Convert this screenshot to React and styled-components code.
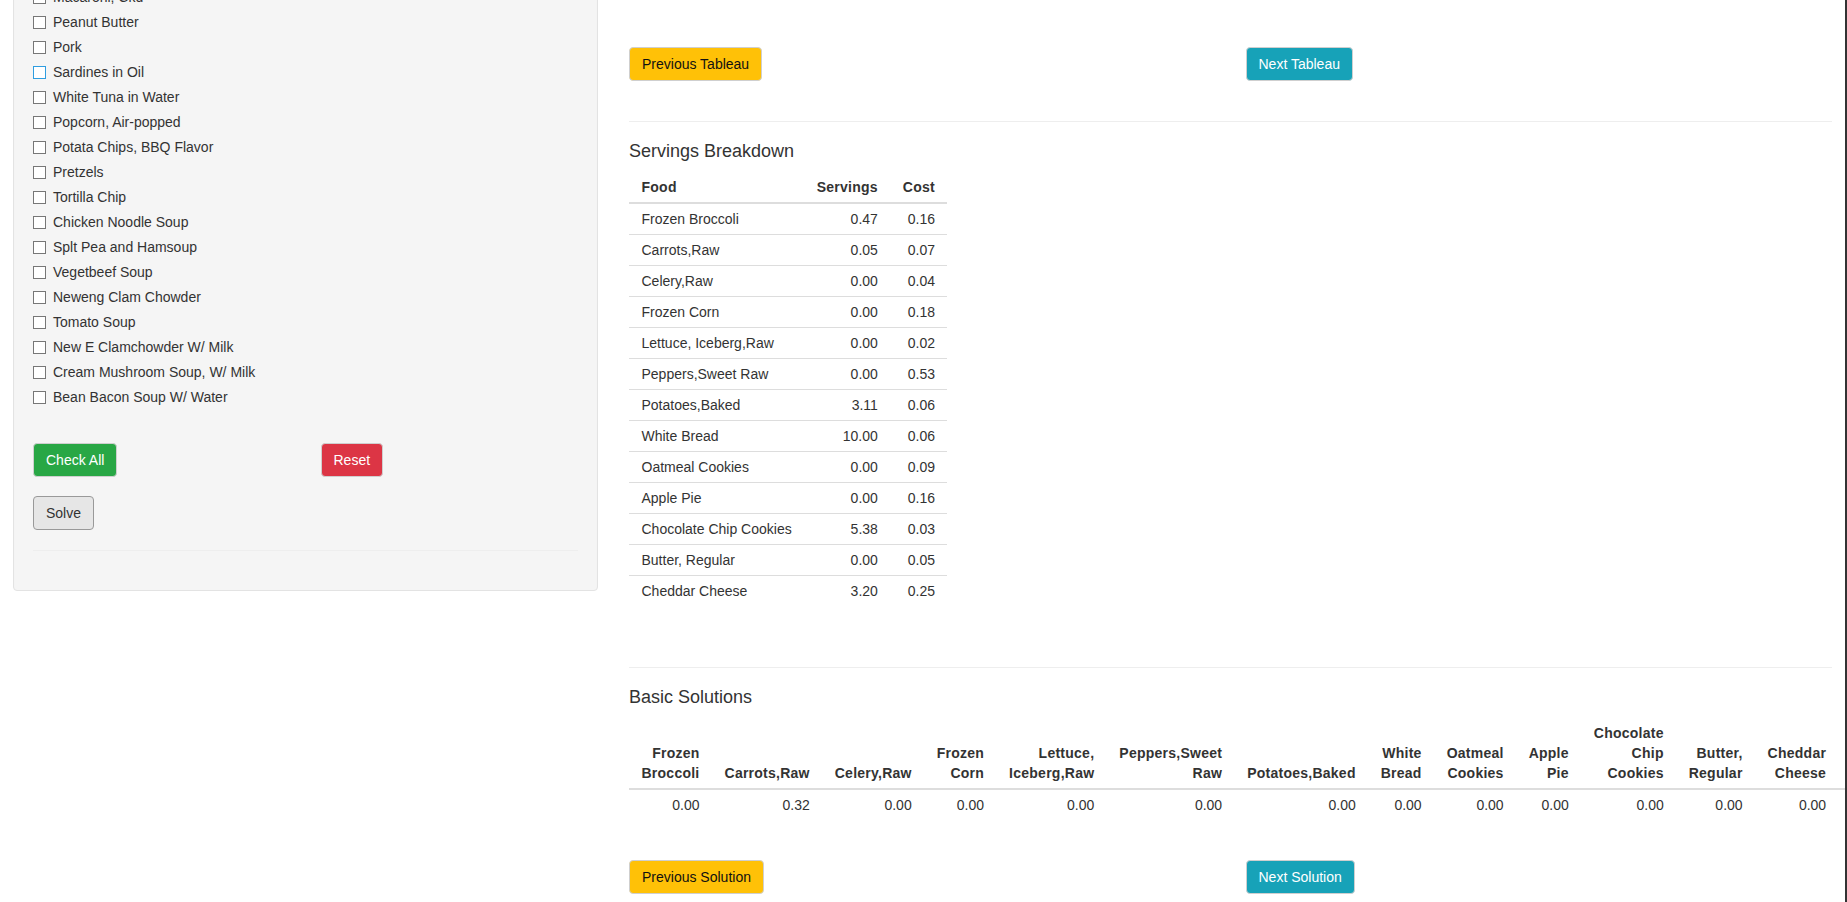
import React from "react";
import styled, { createGlobalStyle } from "styled-components";

const GlobalStyle = createGlobalStyle`
  html, body {
    margin: 0;
    overflow: hidden;
  }
  body {
    font-family: "Liberation Sans", Arial, Helvetica, sans-serif;
    font-size: 14px;
    line-height: 1.42857;
    color: #333;
    background: #fff;
  }
  * { box-sizing: border-box; }
`;

const Page = styled.div`
  display: grid;
  grid-template-columns: 585px 1fr;
  column-gap: 31px;
  padding: 0 15px 0 13px;
  align-items: start;
`;

const Well = styled.div`
  margin-top: -43px;
  padding: 19px;
  background: #f5f5f5;
  border: 1px solid #e3e3e3;
  border-radius: 4px;
  box-shadow: inset 0 1px 1px rgba(0, 0, 0, 0.05);
`;

const FoodList = styled.div`
  display: flex;
  flex-direction: column;
  gap: 5px;
  padding: 10px 0;
`;

const FoodLabel = styled.label`
  display: flex;
  align-items: flex-start;
  height: 20px;
  line-height: 20px;
  cursor: pointer;
`;

const Check = styled.input.attrs({ type: "checkbox" })`
  appearance: none;
  width: 13px;
  height: 13px;
  margin: 4px 7px 0 0;
  flex-shrink: 0;
  background: #fff;
  border: 1px solid ${(p) => (p.$focused ? "#2f9de0" : "#777")};
  border-radius: 0;
`;

const ButtonRow = styled.div`
  display: grid;
  grid-template-columns: 1fr 1fr;
  column-gap: 30px;
  justify-items: start;
  margin-top: ${(p) => p.$top || 0}px;
`;

const variants = {
  success: { bg: "#28a745", fg: "#fff", border: "#cfcfcf" },
  danger: { bg: "#dc3545", fg: "#fff", border: "#cfcfcf" },
  warning: { bg: "#ffc107", fg: "#111", border: "#cfcfcf" },
  info: { bg: "#17a2b8", fg: "#fff", border: "#cfcfcf" },
  plain: { bg: "#e6e6e6", fg: "#333", border: "#999" },
};

const Button = styled.button`
  font-family: inherit;
  font-size: 14px;
  line-height: 20px;
  padding: 6px 12px;
  border-radius: 4px;
  cursor: pointer;
  background: ${(p) => variants[p.$variant].bg};
  color: ${(p) => variants[p.$variant].fg};
  border: 1px solid ${(p) => variants[p.$variant].border};
`;

const Divider = styled.hr`
  border: 0;
  border-top: 1px solid #eee;
  margin: ${(p) => p.$top ?? 20}px 0 20px;
`;

const Main = styled.div`
  min-width: 0;
`;

const SectionTitle = styled.h4`
  font-size: 18px;
  font-weight: 500;
  line-height: 1.1;
  margin: 0 0 10px;
  color: #333;
`;

const DataTable = styled.table`
  border-collapse: collapse;
  border-spacing: 0;
  margin-bottom: ${(p) => p.$after || 40}px;
`;

const Th = styled.th`
  padding: 5px 12.5px;
  text-align: ${(p) => p.$align || "right"};
  vertical-align: bottom;
  border-bottom: 2px solid #ddd;
  font-weight: bold;
  letter-spacing: 0.25px;
  line-height: 20px;
  color: #333;
  ${(p) => p.$tight && "width: 1px;"}
  &:last-child {
    ${(p) => p.$tight && "padding-right: 20px;"}
  }
`;

const Td = styled.td`
  padding: 5px 12.5px;
  text-align: ${(p) => p.$align || "right"};
  border-top: 1px solid #ddd;
  line-height: 20px;
  ${(p) => p.$tight && "width: 1px; border-top: 0;"}
  &:last-child {
    ${(p) => p.$tight && "padding-right: 20px;"}
  }
`;

const EdgeLine = styled.div`
  position: fixed;
  top: 0;
  right: 0;
  bottom: 0;
  width: 2px;
  background: #333;
`;

const foods = [
  "Macaroni, Ckd",
  "Peanut Butter",
  "Pork",
  "Sardines in Oil",
  "White Tuna in Water",
  "Popcorn, Air-popped",
  "Potata Chips, BBQ Flavor",
  "Pretzels",
  "Tortilla Chip",
  "Chicken Noodle Soup",
  "Splt Pea and Hamsoup",
  "Vegetbeef Soup",
  "Neweng Clam Chowder",
  "Tomato Soup",
  "New E Clamchowder W/ Milk",
  "Cream Mushroom Soup, W/ Milk",
  "Bean Bacon Soup W/ Water",
];

const servings = [
  ["Frozen Broccoli", "0.47", "0.16"],
  ["Carrots,Raw", "0.05", "0.07"],
  ["Celery,Raw", "0.00", "0.04"],
  ["Frozen Corn", "0.00", "0.18"],
  ["Lettuce, Iceberg,Raw", "0.00", "0.02"],
  ["Peppers,Sweet Raw", "0.00", "0.53"],
  ["Potatoes,Baked", "3.11", "0.06"],
  ["White Bread", "10.00", "0.06"],
  ["Oatmeal Cookies", "0.00", "0.09"],
  ["Apple Pie", "0.00", "0.16"],
  ["Chocolate Chip Cookies", "5.38", "0.03"],
  ["Butter, Regular", "0.00", "0.05"],
  ["Cheddar Cheese", "3.20", "0.25"],
];

const basic = servings.map(([name]) => [name, name === "Carrots,Raw" ? "0.32" : "0.00"]);

export default function App() {
  return (
    <>
      <GlobalStyle />
      <Page>
        <Well>
          <FoodList>
            {foods.map((f) => (
              <FoodLabel key={f}>
                <Check $focused={f === "Sardines in Oil"} />
                {f}
              </FoodLabel>
            ))}
          </FoodList>
          <ButtonRow $top={26}>
            <Button $variant="success">Check All</Button>
            <Button $variant="danger">Reset</Button>
          </ButtonRow>
          <ButtonRow $top={19}>
            <Button $variant="plain">Solve</Button>
          </ButtonRow>
          <Divider />
        </Well>

        <Main>
          <ButtonRow $top={47}>
            <Button $variant="warning">Previous Tableau</Button>
            <Button $variant="info">Next Tableau</Button>
          </ButtonRow>
          <Divider $top={40} />

          <SectionTitle>Servings Breakdown</SectionTitle>
          <DataTable $after={61}>
            <thead>
              <tr>
                <Th $align="left">Food</Th>
                <Th>Servings</Th>
                <Th>Cost</Th>
              </tr>
            </thead>
            <tbody>
              {servings.map(([name, s, c]) => (
                <tr key={name}>
                  <Td $align="left">{name}</Td>
                  <Td>{s}</Td>
                  <Td>{c}</Td>
                </tr>
              ))}
            </tbody>
          </DataTable>
          <Divider />

          <SectionTitle>Basic Solutions</SectionTitle>
          <DataTable>
            <thead>
              <tr>
                {basic.map(([name]) => (
                  <Th key={name} $tight>
                    {name}
                  </Th>
                ))}
              </tr>
            </thead>
            <tbody>
              <tr>
                {basic.map(([name, v]) => (
                  <Td key={name} $tight>
                    {v}
                  </Td>
                ))}
              </tr>
            </tbody>
          </DataTable>

          <ButtonRow>
            <Button $variant="warning">Previous Solution</Button>
            <Button $variant="info">Next Solution</Button>
          </ButtonRow>
        </Main>
      </Page>
      <EdgeLine />
    </>
  );
}
